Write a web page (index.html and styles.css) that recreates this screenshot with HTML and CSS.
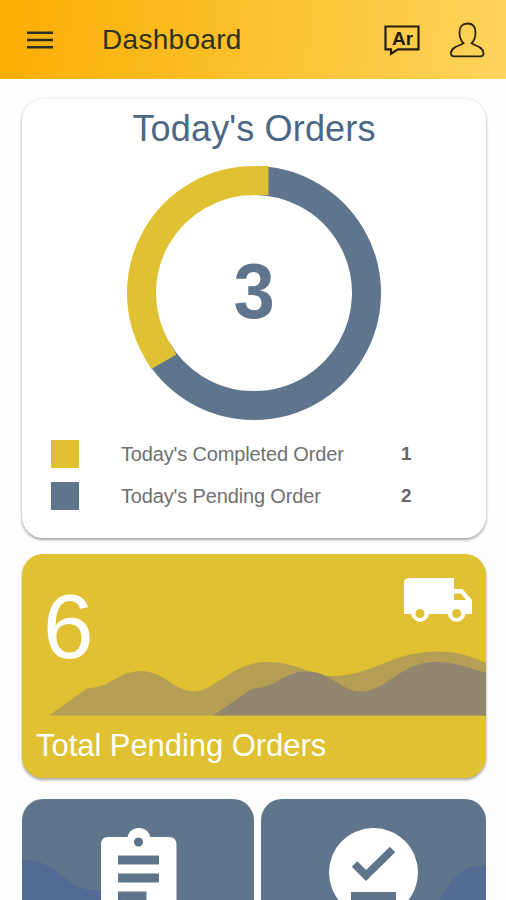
FILE: index.html
```html
<!DOCTYPE html>
<html lang="en">
<head>
<meta charset="utf-8">
<title>Dashboard</title>
<link rel="stylesheet" href="styles.css">
</head>
<body>
<header class="topbar">
  <svg class="menu" viewBox="0 0 26 18"><path d="M0 1.8h26M0 9h26M0 16.2h26" stroke="#2b2f24" stroke-width="2.5"/></svg>
  <h1 class="page-title">Dashboard</h1>
  <div class="lang">
    <svg viewBox="0 0 36 32"><path d="M1.500 2.500h33v22.800h-20.500l-7 4.500v-4.500h-5.500z" fill="none" stroke="#241e0a" stroke-width="2.200"/></svg>
    <span class="lang-text">Ar</span>
  </div>
  <svg class="user" viewBox="0 0 36 36"><path d="M14.500 21.200C11.500 18.500 10.500 15 10.500 10.500C10.500 4.500 13.300 1.500 18.500 1.500S26.500 4.500 26.500 10.500C26.500 15 25.500 18.500 22.500 21.200C25 23.700 34.500 24.300 34.500 31.500Q34.500 34.300 31.500 34.300H5Q2 34.300 2 31.500C2 24.300 12 23.700 14.500 21.200Z" fill="none" stroke="#2b250d" stroke-width="1.8"/></svg>
</header>
<main class="content">
  <section class="card orders">
    <h2 class="orders-title">Today's Orders</h2>
    <div class="donut">
      <svg viewBox="0 0 254 254" fill="none" stroke-width="29">
        <path d="M127 14.500A112.500 112.500 0 1 1 29.570 183.250" stroke="#5f758d"/>
        <path d="M29.570 183.250A112.500 112.500 0 0 1 127 14.500" stroke="#e0c131" stroke-linecap="square"/>
      </svg>
      <strong class="donut-total">3</strong>
    </div>
    <div class="legend">
      <div class="row"><i class="swatch done"></i><span class="label">Today's Completed Order</span><b class="count">1</b></div>
      <div class="row"><i class="swatch pending"></i><span class="label">Today's Pending Order</span><b class="count">2</b></div>
    </div>
  </section>
  <section class="card total">
    <div class="total-head">
      <span class="total-number">6</span>
      <svg class="truck" viewBox="0 0 68 45"><path fill="#fff" fill-rule="evenodd" d="M5 0H50V11H58.500L68 22V36H61.500A9 9 0 0 1 43.700 36H25A9 9 0 0 1 7.200 36H0V5Q0 0 5 0ZM50 15.500V22H62L57 15.500ZM16 31a4.500 4.500 0 1 0 .01 0ZM52.600 31a4.500 4.500 0 1 0 .01 0Z"/></svg>
    </div>
    <svg class="waves" viewBox="0 0 464 66">
      <path fill="#b49f54" d="M27 65.500L64 39Q68 37.500 73 37.500C88 36 98 21 119 21C142 21 152 41.500 172 41.500C193 41.500 210 12 245 12C276 12 288 26 310 26C350 26 370 1.500 415 1.500C437 1.500 450 7 464 13V65.500Z"/>
      <path fill="#92876e" d="M191 65.500L229 39.500Q233 38 239 37.500C256 35 263 21.500 285 21.500C309 21.500 319 41.500 339 41.500C364 41.500 379 12 413 12C437 12 447 19 464 22.500V65.500Z"/>
    </svg>
    <h2 class="total-title">Total Pending Orders</h2>
  </section>
  <div class="tiles">
    <section class="tile">
      <svg class="tile-art" viewBox="0 0 232 101">
        <path fill="#536b94" d="M0 61C32 58 45 92 72 91Q90 92 100 101H0Z"/>
        <path fill="#fff" fill-rule="evenodd" d="M86 38H105.500C108 26 125.500 26 128.500 38H147Q154.500 38 154.500 46V101H79V46Q79 38 86 38ZM116.500 38.500a4.500 4.500 0 1 0 .01 0ZM96 56.500V65.500H137V56.500ZM96 74.500V83.500H137V74.500ZM96 92.500V101H124.500V92.500Z"/>
      </svg>
    </section>
    <section class="tile">
      <svg class="tile-art" viewBox="0 0 225 101">
        <path fill="#546b94" d="M179 101C190 81 201 65 225 67V101Z"/>
        <circle cx="112.500" cy="73.500" r="44.500" fill="#fff"/>
        <path d="M93.500 65L105 76.500L131.500 50.500" fill="none" stroke="#5f758b" stroke-width="7.800"/>
        <path d="M90 93H135V101H90Z" fill="#5f758b"/>
      </svg>
    </section>
  </div>
</main>
</body>
</html>
```
FILE: styles.css
```css
* { box-sizing: border-box; }
body {
  margin: 0;
  height: 900px;
  overflow: hidden;
  background: #fefefe;
  font-family: "Liberation Sans", Arial, sans-serif;
}
h1, h2 { margin: 0; font-weight: 400; white-space: nowrap; }
svg { display: block; }

.topbar {
  height: 79px;
  padding: 0 21px 0 27px;
  display: flex;
  align-items: center;
  background: linear-gradient(97deg, #fcae02 0%, #fbbd24 40%, #fdd45d 100%);
}
.menu { width: 26px; height: 18px; margin-top: 1px; }
.page-title {
  margin-left: 49px;
  font-size: 28px;
  letter-spacing: 0.3px;
  line-height: 34px;
  color: #2e311f;
}
.lang { position: relative; width: 36px; height: 32px; margin-left: auto; }
.lang-text {
  position: absolute;
  left: 8px;
  top: 5px;
  font-size: 19px;
  line-height: 20px;
  font-weight: 700;
  color: #241e0a;
}
.user { width: 36px; height: 36px; margin-left: 29px; }

.content { padding: 20px 20px 0 22px; }
.card { width: 464px; border-radius: 21px; }
.orders {
  height: 439px;
  padding-top: 10px;
  background: #fff;
  box-shadow: 0 2px 3px rgba(0, 0, 0, .32), 0 0 3px rgba(0, 0, 0, .12);
}
.orders-title {
  font-size: 36px;
  line-height: 40px;
  letter-spacing: 0.15px;
  text-align: center;
  color: #4c6785;
}
.donut { position: relative; width: 254px; height: 254px; margin: 16.5px 0 0 104.500px; }
.donut-total {
  position: absolute;
  inset: 0;
  text-align: center;
  font-size: 78px;
  line-height: 250px;
  transform: scaleX(.95);
  color: #5f758d;
}
.legend { padding: 20px 0 0 29px; display: grid; gap: 14px; }
.row { display: flex; align-items: center; height: 28px; }
.swatch { width: 28px; height: 28px; }
.done { background: #e0c131; }
.pending { background: #5f758d; }
.label { width: 280px; margin-left: 42px; padding-top: 1px; font-size: 20px; letter-spacing: -0.15px; color: #707070; }
.count { font-size: 19px; color: #666; }

.total {
  height: 224px;
  margin-top: 16px;
  background: #e0c131;
  box-shadow: 0 2px 3px rgba(0, 0, 0, .35);
}
.total-head { height: 96px; padding: 24px 14px 0 22px; display: flex; justify-content: space-between; }
.total-number { font-size: 91px; line-height: 98px; margin-left: -1px; color: #fff; }
.truck { width: 68px; height: 45px; }
.waves { width: 464px; height: 66px; }
.total-title { padding: 12px 0 0 14px; font-size: 31px; line-height: 36px; letter-spacing: -0.05px; color: #fff; }

.tiles { display: grid; grid-template-columns: 232px 225px; gap: 7px; margin-top: 21px; }
.tile { height: 101px; border-radius: 21px 21px 0 0; overflow: hidden; background: #5f758b; }
.tile-art { width: 100%; height: 101px; }
```
